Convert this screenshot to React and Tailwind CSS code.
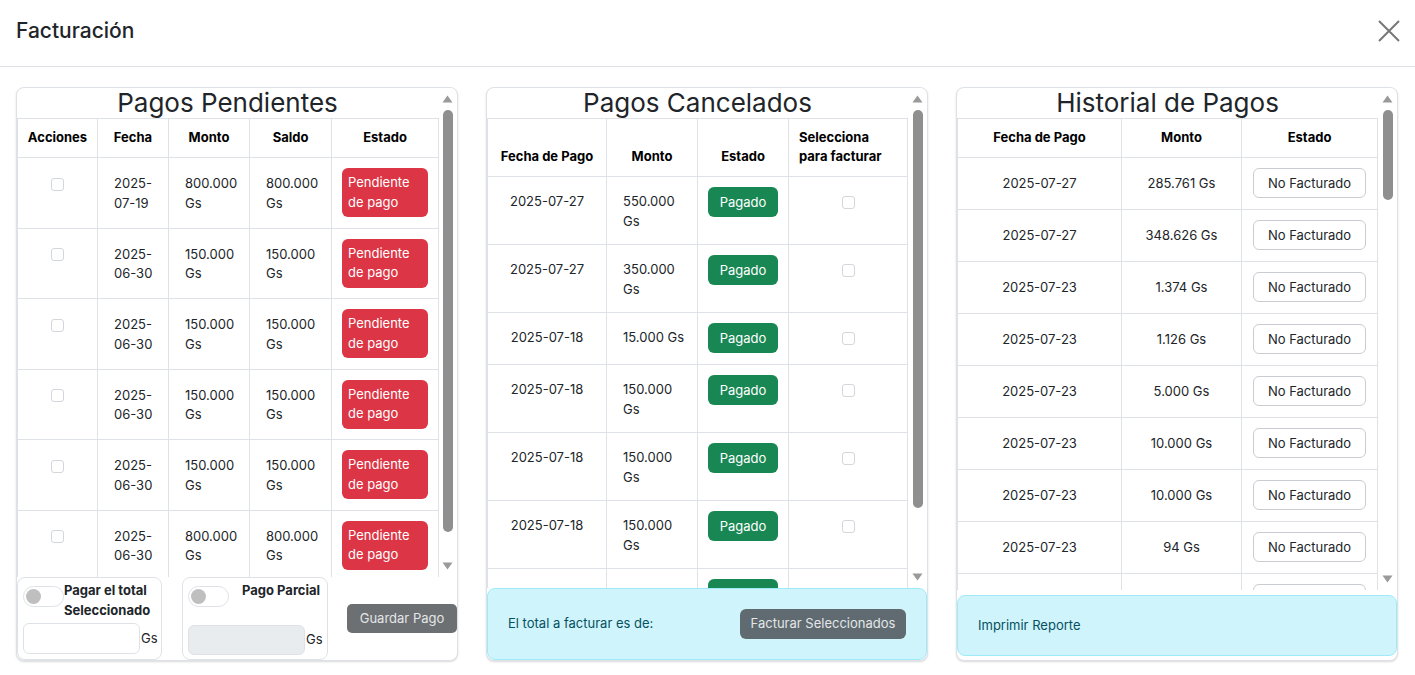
import React from "react";

const pendientes = [
  ["2025-", "07-19", "800.000 Gs", "800.000 Gs"],
  ["2025-", "06-30", "150.000 Gs", "150.000 Gs"],
  ["2025-", "06-30", "150.000 Gs", "150.000 Gs"],
  ["2025-", "06-30", "150.000 Gs", "150.000 Gs"],
  ["2025-", "06-30", "150.000 Gs", "150.000 Gs"],
  ["2025-", "06-30", "800.000 Gs", "800.000 Gs"],
];

const cancelados = [
  ["2025-07-27", ["550.000", "Gs"]],
  ["2025-07-27", ["350.000", "Gs"]],
  ["2025-07-18", ["15.000 Gs"]],
  ["2025-07-18", ["150.000", "Gs"]],
  ["2025-07-18", ["150.000", "Gs"]],
  ["2025-07-18", ["150.000", "Gs"]],
  ["2025-07-18", ["150.000", "Gs"]],
];

const historialBase = [
  ["2025-07-27", "285.761 Gs"],
  ["2025-07-27", "348.626 Gs"],
  ["2025-07-23", "1.374 Gs"],
  ["2025-07-23", "1.126 Gs"],
  ["2025-07-23", "5.000 Gs"],
  ["2025-07-23", "10.000 Gs"],
  ["2025-07-23", "10.000 Gs"],
  ["2025-07-23", "94 Gs"],
];
const extraMontos = ["150.000 Gs", "15.000 Gs", "150.000 Gs", "350.000 Gs", "550.000 Gs", "20.000 Gs", "45.500 Gs", "800.000 Gs"];
const extraFechas = ["2025-07-22", "2025-07-18", "2025-07-18", "2025-07-15", "2025-07-10", "2025-07-05", "2025-06-30", "2025-06-28"];
const historial = [...historialBase];
for (let i = 0; i < 40; i++) {
  historial.push([extraFechas[Math.floor(i / 5) % extraFechas.length], extraMontos[i % extraMontos.length]]);
}

function Checkbox() {
  return (
    <span className="inline-block align-middle w-[13px] h-[13px] border border-[#d3d7db] rounded-[3px] bg-white" />
  );
}

function Switch() {
  return (
    <span className="inline-flex shrink-0 items-center w-[41px] h-[21px] rounded-full border border-[#dee2e6] bg-white pl-[2px]">
      <span className="block w-[15px] h-[15px] rounded-full bg-[#bfbfbf]" />
    </span>
  );
}

function Scrollbar({ thumb }) {
  return (
    <div className="w-[15px] shrink-0 mr-[2px] flex flex-col bg-white">
      <div className="h-[20px] shrink-0 flex justify-center pt-[7px]">
        <svg width="11" height="8" viewBox="0 0 11 8">
          <path d="M5.5 0.5L10.5 7.5H0.5Z" fill="#9a9a9a" />
        </svg>
      </div>
      <div className="flex-1 flex justify-center pt-[2px]">
        <div className={`w-[10px] rounded-full bg-[#8f8f8f] ${thumb}`} />
      </div>
      <div className="h-[20px] shrink-0 flex justify-center pt-[5px]">
        <svg width="11" height="8" viewBox="0 0 11 8">
          <path d="M0.5 0.5H10.5L5.5 7.5Z" fill="#9a9a9a" />
        </svg>
      </div>
    </div>
  );
}

const th = "border border-[#dee2e6] font-bold text-[13px] leading-[19px] pt-[9px] pb-[10px] px-2 align-bottom text-center text-black";
const td = "border border-[#dee2e6] text-[13px] leading-[19.5px] align-top text-[#212529]";

function Title({ children }) {
  return (
    <h3 className="text-[26px] leading-[30px] text-center text-[#212529] font-normal w-[421px]">{children}</h3>
  );
}

const panelCls =
  "w-[442px] h-[574px] shrink-0 border border-[#dee2e6] rounded-lg shadow-[0_1px_2px_rgba(0,0,0,0.15)] flex flex-col overflow-hidden bg-white";

function PanelPendientes() {
  return (
    <div className={panelCls}>
      <div className="h-[489px] shrink-0 flex">
        <div className="flex-1 min-w-0 overflow-hidden">
          <Title>Pagos Pendientes</Title>
          <table className="table-fixed border-collapse w-[421px]">
            <colgroup>
              <col className="w-[80px]" />
              <col className="w-[71px]" />
              <col className="w-[81px]" />
              <col className="w-[82px]" />
              <col className="w-[107px]" />
            </colgroup>
            <thead>
              <tr>
                <th className={th}>Acciones</th>
                <th className={th}>Fecha</th>
                <th className={th}>Monto</th>
                <th className={th}>Saldo</th>
                <th className={th}>Estado</th>
              </tr>
            </thead>
            <tbody>
              {pendientes.map((r, i) => (
                <tr key={i}>
                  <td className={`${td} text-center pt-[16px]`}>
                    <Checkbox />
                  </td>
                  <td className={`${td} pl-4 pr-2 pt-[16px] text-left`}>
                    <span className="whitespace-nowrap">{r[0]}</span>
                    <wbr />
                    <span className="whitespace-nowrap">{r[1]}</span>
                  </td>
                  <td className={`${td} pl-4 pr-3 pt-[16px] text-left`}>{r[2]}</td>
                  <td className={`${td} pl-4 pr-3 pt-[16px] text-left`}>{r[3]}</td>
                  <td className={`${td} px-[10px] pt-[10px] pb-[10.5px]`}>
                    <span className="block w-full bg-[#dc3545] text-white rounded-md px-[6px] py-[5px] text-left text-[13px] leading-[19.5px]">
                      Pendiente de pago
                    </span>
                  </td>
                </tr>
              ))}
            </tbody>
          </table>
        </div>
        <Scrollbar thumb="h-[422px]" />
      </div>
      <div className="flex items-center flex-1">
        <div className="w-[145px] h-[83px] shrink-0 border border-[#dee2e6] rounded-lg pl-[5px] pt-[3px]">
          <div className="flex items-start">
            <span className="mt-[5px]">
              <Switch />
            </span>
            <span className="font-bold text-[13px] leading-[19.5px] text-[#212529]">Pagar el total Seleccionado</span>
          </div>
          <div className="flex items-center mt-[3px]">
            <span className="block w-[117px] h-[31px] border border-[#dee2e6] rounded-md bg-white" />
            <span className="text-[13px] ml-[1px] text-[#212529]">Gs</span>
          </div>
        </div>
        <div className="w-[146px] h-[83px] shrink-0 ml-[20px] border border-[#dee2e6] rounded-lg pl-[5px] pt-[3px]">
          <div className="flex items-start">
            <span className="mt-[5px]">
              <Switch />
            </span>
            <span className="font-bold text-[13px] leading-[19.5px] text-[#212529] ml-[13px]">Pago Parcial</span>
          </div>
          <div className="flex items-center mt-[15px]">
            <span className="block w-[117px] h-[30px] border border-[#dee2e6] rounded-md bg-[#e9ecef]" />
            <span className="text-[13px] ml-[1px] text-[#212529]">Gs</span>
          </div>
        </div>
        <button className="ml-[19px] w-[110px] h-[29px] shrink-0 rounded-[5px] bg-[#6c7073] text-[#e4e6e8] text-[13px]">
          Guardar Pago
        </button>
      </div>
    </div>
  );
}

function PanelCancelados() {
  return (
    <div className={panelCls}>
      <div className="h-[500px] shrink-0 flex">
        <div className="flex-1 min-w-0 overflow-hidden">
          <Title>Pagos Cancelados</Title>
          <table className="table-fixed border-collapse w-[420px]">
            <colgroup>
              <col className="w-[119px]" />
              <col className="w-[91px]" />
              <col className="w-[91px]" />
              <col className="w-[119px]" />
            </colgroup>
            <thead>
              <tr>
                <th className={th}>Fecha de Pago</th>
                <th className={th}>Monto</th>
                <th className={th}>Estado</th>
                <th className={`${th} !text-left !pl-[10px]`}>Selecciona para facturar</th>
              </tr>
            </thead>
            <tbody>
              {cancelados.map((r, i) => (
                <tr key={i}>
                  <td className={`${td} text-center px-2 pt-[15px] whitespace-nowrap`}>{r[0]}</td>
                  <td className={`${td} pl-4 pr-1 pt-[15px] pb-[13px] text-left whitespace-nowrap`}>
                    {r[1].map((l, j) => (
                      <div key={j}>{l}</div>
                    ))}
                  </td>
                  <td className={`${td} px-[10px] pt-[10px] pb-[11px]`}>
                    <span className="block bg-[#198754] text-white rounded-md h-[30px] leading-[30px] text-center text-[13px]">
                      Pagado
                    </span>
                  </td>
                  <td className={`${td} text-center pt-[15px]`}>
                    <Checkbox />
                  </td>
                </tr>
              ))}
            </tbody>
          </table>
        </div>
        <Scrollbar thumb="h-[398px]" />
      </div>
      <div className="flex-1 border border-[#9eeaf9] bg-[#cff4fc] rounded-lg flex items-center justify-between pl-[20px] pr-[20px]">
        <span className="text-[13px] text-[#055160]">El total a facturar es de:</span>
        <button className="w-[166px] h-[30px] rounded-md bg-[#5f6b71] text-[#e4e6e8] text-[13px]">
          Facturar Seleccionados
        </button>
      </div>
    </div>
  );
}

function PanelHistorial() {
  return (
    <div className={panelCls}>
      <div className="h-[502px] shrink-0 flex">
        <div className="flex-1 min-w-0 overflow-hidden">
          <Title>Historial de Pagos</Title>
          <table className="table-fixed border-collapse w-[420px]">
            <colgroup>
              <col className="w-[164px]" />
              <col className="w-[120px]" />
              <col className="w-[136px]" />
            </colgroup>
            <thead>
              <tr>
                <th className={th}>Fecha de Pago</th>
                <th className={th}>Monto</th>
                <th className={th}>Estado</th>
              </tr>
            </thead>
            <tbody>
              {historial.map((r, i) => (
                <tr key={i}>
                  <td className={`${td} text-center pt-[16px]`}>{r[0]}</td>
                  <td className={`${td} text-center pt-[16px]`}>{r[1]}</td>
                  <td className={`${td} px-[11px] pt-[10px] pb-[11px]`}>
                    <span className="block border border-[#c9ccd0] rounded-md h-[30px] leading-[28px] text-center text-[13px] text-[#212529]">
                      No Facturado
                    </span>
                  </td>
                </tr>
              ))}
            </tbody>
          </table>
        </div>
        <Scrollbar thumb="h-[90px]" />
      </div>
      <div className="flex-1 pt-[5px] pb-[4px] flex">
        <div className="flex-1 border border-[#9eeaf9] bg-[#cff4fc] rounded-lg flex items-center pl-[20px]">
          <span className="text-[13px] text-[#055160]">Imprimir Reporte</span>
        </div>
      </div>
    </div>
  );
}

export default function App() {
  return (
    <div className="w-[1415px] h-[675px] overflow-hidden bg-white font-['Inter','Noto_Sans',sans-serif] text-[#212529]">
      <div className="h-[67px] border-b border-[#dee2e6] flex items-center justify-between pl-4 pr-[15px] pb-[4px]">
        <h5 className="text-[21px] font-medium text-[#212529] leading-[30px]">Facturación</h5>
        <button aria-label="Cerrar" className="w-[22px] h-[22px] flex items-center justify-center">
          <svg width="22" height="22" viewBox="0 0 22 22" fill="none">
            <path d="M1 1L21 21M21 1L1 21" stroke="#777" strokeWidth="2" />
          </svg>
        </button>
      </div>
      <div className="flex gap-[28px] px-4 pt-[20px]">
        <PanelPendientes />
        <PanelCancelados />
        <PanelHistorial />
      </div>
    </div>
  );
}
